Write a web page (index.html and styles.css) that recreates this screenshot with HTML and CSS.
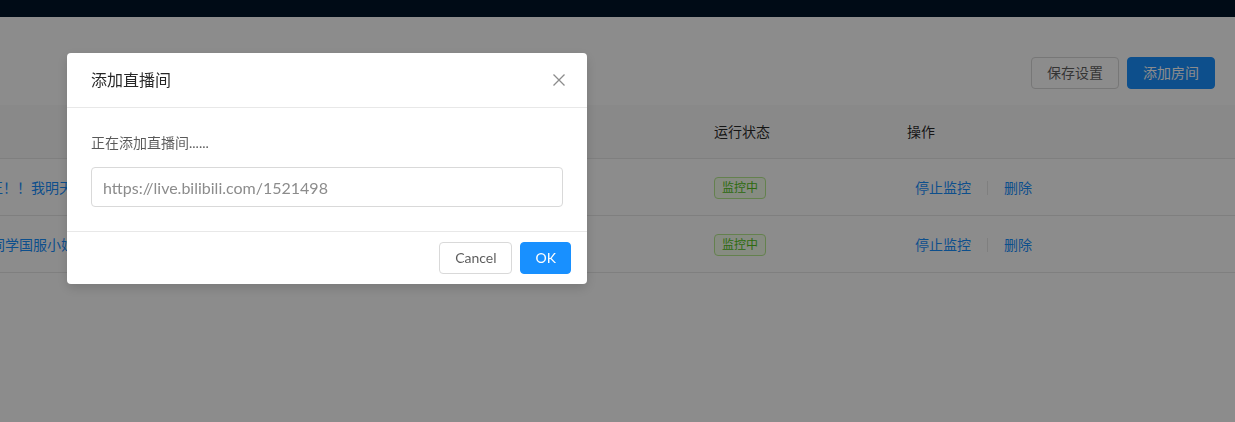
FILE: index.html
```html
<!DOCTYPE html>
<html lang="zh-CN">
<head>
<meta charset="utf-8">
<title>直播间监控</title>
<link rel="stylesheet" href="styles.css">
</head>
<body>
<div class="app">
  <header class="topbar"></header>
  <main class="content">
    <div class="toolbar">
      <button class="btn">保存设置</button>
      <button class="btn btn-primary">添加房间</button>
    </div>
    <table class="rooms">
      <colgroup>
        <col class="col-title">
        <col class="col-status">
        <col>
      </colgroup>
      <thead>
        <tr><th></th><th>运行状态</th><th>操作</th></tr>
      </thead>
      <tbody>
        <tr>
          <td class="title-cell"><a class="room-link">正！！我明天还来直播哦</a></td>
          <td><span class="tag">监控中</span></td>
          <td class="actions"><a class="act">停止监控</a><span class="divider"></span><a class="act">删除</a></td>
        </tr>
        <tr>
          <td class="title-cell"><a class="room-link room-link-2">同学国服小姐姐在线</a></td>
          <td><span class="tag">监控中</span></td>
          <td class="actions"><a class="act">停止监控</a><span class="divider"></span><a class="act">删除</a></td>
        </tr>
      </tbody>
    </table>
  </main>
</div>

<div class="mask"></div>

<div class="modal-wrap">
  <div class="modal">
    <div class="modal-header">
      <div class="modal-title">添加直播间</div>
      <span class="modal-close">
        <svg width="12" height="12" viewBox="0 0 12 12"><path d="M0.5 0.5 L11.5 11.5 M11.5 0.5 L0.5 11.5" stroke="#8c8c8c" stroke-width="1.3" fill="none"/></svg>
      </span>
    </div>
    <div class="modal-body">
      <p class="modal-text">正在添加直播间......</p>
      <input class="input-lg" type="text" value="https://live.bilibili.com/1521498">
    </div>
    <div class="modal-footer">
      <button class="btn btn-cancel">Cancel</button>
      <button class="btn btn-ok">OK</button>
    </div>
  </div>
</div>
</body>
</html>
```

FILE: styles.css
```css
* { box-sizing: border-box; }

html, body {
  margin: 0;
  padding: 0;
  height: 100%;
  overflow: hidden;
}

body {
  font-family: "Lato", "Noto Sans CJK SC", sans-serif;
  font-size: 14px;
  color: rgba(0, 0, 0, 0.65);
  background: #fff;
}

.topbar {
  height: 17px;
  background: #001529;
}

.content {
  background: #fff;
}

.toolbar {
  display: flex;
  justify-content: flex-end;
  gap: 8px;
  padding: 40px 20px 0 0;
  margin-bottom: 16px;
}

.btn {
  height: 32px;
  padding: 0 15px;
  font-family: "Lato", "Noto Sans CJK SC", sans-serif;
  font-size: 14px;
  line-height: 30px;
  border: 1px solid #d9d9d9;
  border-radius: 4px;
  background: #fff;
  color: rgba(0, 0, 0, 0.65);
  white-space: nowrap;
}

.btn-primary {
  background: #1890ff;
  border-color: #1890ff;
  color: #fff;
}

.rooms {
  width: 100%;
  border-collapse: collapse;
  table-layout: fixed;
}

.col-title { width: 698px; }
.col-status { width: 193px; }

.rooms th {
  padding: 16px 16px 15px;
  line-height: 22px;
  text-align: left;
  font-weight: 400;
  color: rgba(0, 0, 0, 0.85);
  background: #fafafa;
  border-bottom: 1px solid #e8e8e8;
}

.rooms td {
  padding: 18px 16px 16px;
  line-height: 22px;
  border-bottom: 1px solid #e8e8e8;
  white-space: nowrap;
}

.rooms td.title-cell {
  padding-left: 0;
}

.room-link {
  display: inline-block;
  margin-left: -11px;
  color: #1890ff;
}

.room-link-2 { margin-left: -9px; }

.tag {
  display: inline-block;
  height: 22px;
  padding: 0 7px;
  font-size: 12px;
  line-height: 20px;
  color: #52c41a;
  background: #f6ffed;
  border: 1px solid #b7eb8f;
  border-radius: 4px;
  vertical-align: top;
}

.rooms td.actions { padding-left: 17px; }

.act {
  display: inline-block;
  padding: 0 7px;
  color: #1890ff;
  vertical-align: top;
}

.divider {
  display: inline-block;
  width: 1px;
  height: 14px;
  margin: 4px 9px 0;
  background: #e8e8e8;
  vertical-align: top;
}

.mask {
  position: fixed;
  inset: 0;
  background: rgba(0, 0, 0, 0.45);
}

.modal-wrap {
  position: fixed;
  inset: 0;
  padding: 53px 0 0 67px;
}

.modal {
  width: 520px;
  background: #fff;
  border-radius: 4px;
  box-shadow: 0 4px 12px rgba(0, 0, 0, 0.15);
}

.modal-header {
  display: flex;
  justify-content: space-between;
  align-items: center;
  padding: 16px 22px 16px 24px;
  border-bottom: 1px solid #e8e8e8;
}

.modal-title {
  font-size: 16px;
  line-height: 22px;
  color: rgba(0, 0, 0, 0.85);
}

.modal-close {
  display: flex;
  width: 12px;
  height: 12px;
}

.modal-body {
  padding: 24px;
}

.modal-text {
  margin: 0 0 13px;
  line-height: 22px;
  color: rgba(0, 0, 0, 0.65);
}

.input-lg {
  display: block;
  width: 100%;
  height: 40px;
  padding: 0 11px;
  font-family: "Lato", "Noto Sans CJK SC", sans-serif;
  font-size: 16px;
  color: #8c8c8c;
  border: 1px solid #d9d9d9;
  border-radius: 4px;
  background: #fff;
  outline: none;
}

.modal-footer {
  display: flex;
  justify-content: flex-end;
  gap: 8px;
  padding: 10px 16px;
  border-top: 1px solid #e8e8e8;
}

.btn-cancel {
  padding: 0 14px 0 15px;
}

.btn-ok {
  padding: 0 14px 0 15px;
  background: #1890ff;
  border-color: #1890ff;
  color: #fff;
}
```
